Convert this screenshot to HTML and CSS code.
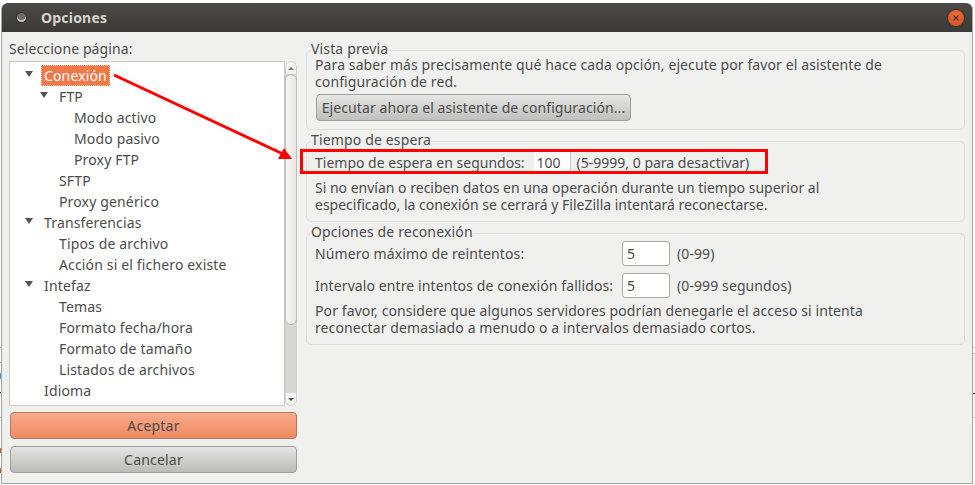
FILE: index.html
```html
<!DOCTYPE html>
<html lang="es">
  <head>
    <meta charset="utf-8" />
    <meta name="viewport" content="width=device-width" />
    <title>Opciones</title>
    <link rel="stylesheet" href="styles.css">
  </head>
  <body>
    <div class="window">
      <header class="titlebar">
        <span class="title-icon"></span>
        <span class="title">Opciones</span>
        <span class="close">
          <svg width="8" height="8" viewBox="0 0 8 8"><path d="M1.5 1.5l5 5M6.5 1.5l-5 5" stroke="#5b2410" stroke-width="1.3" /></svg>
        </span>
      </header>

      <div class="content">
        <div class="left">
          <div class="select-label">Seleccione página:</div>
          <div class="tree-wrap">
            <ul class="tree">
              <li class="row l0 open"><span class="selected">Conexión</span></li>
              <li class="row l1 open">FTP</li>
              <li class="row l2">Modo activo</li>
              <li class="row l2">Modo pasivo</li>
              <li class="row l2">Proxy FTP</li>
              <li class="row l1">SFTP</li>
              <li class="row l1">Proxy genérico</li>
              <li class="row l0 open">Transferencias</li>
              <li class="row l1">Tipos de archivo</li>
              <li class="row l1">Acción si el fichero existe</li>
              <li class="row l0 open">Intefaz</li>
              <li class="row l1">Temas</li>
              <li class="row l1">Formato fecha/hora</li>
              <li class="row l1">Formato de tamaño</li>
              <li class="row l1">Listados de archivos</li>
              <li class="row l0">Idioma</li>
            </ul>
            <div class="scrollbar">
              <div class="sb-btn up"></div>
              <div class="sb-track"><div class="sb-thumb"></div></div>
              <div class="sb-btn down"></div>
            </div>
          </div>
          <button class="btn btn-ok">Aceptar</button>
          <button class="btn btn-cancel">Cancelar</button>
        </div>

        <div class="right">
          <fieldset class="group group-preview">
            <legend>Vista previa</legend>
            <p>Para saber más precisamente qué hace cada opción, ejecute por favor el asistente de<br>configuración de red.</p>
            <button class="btn btn-wizard">Ejecutar ahora el asistente de configuración...</button>
          </fieldset>

          <fieldset class="group group-timeout">
            <legend>Tiempo de espera</legend>
            <div class="timeout-row">
              <span>Tiempo de espera en segundos:</span>
              <span class="timeout-value">100</span>
              <span>(5-9999, 0 para desactivar)</span>
            </div>
            <p>Si no envían o reciben datos en una operación durante un tiempo superior al<br>especificado, la conexión se cerrará y FileZilla intentará reconectarse.</p>
          </fieldset>

          <fieldset class="group group-retry">
            <legend>Opciones de reconexión</legend>
            <div class="retry-grid">
              <span>Número máximo de reintentos:</span>
              <span class="num-input">5</span>
              <span>(0-99)</span>
              <span>Intervalo entre intentos de conexión fallidos:</span>
              <span class="num-input">5</span>
              <span>(0-999 segundos)</span>
            </div>
            <p>Por favor, considere que algunos servidores podrían denegarle el acceso si intenta<br>reconectar demasiado a menudo o a intervalos demasiado cortos.</p>
          </fieldset>
        </div>
      </div>
    </div>

    <!-- annotations drawn on top of the screenshot, plus slivers of the window behind -->
    <svg class="notes" width="975" height="485" viewBox="0 0 975 485">
      <rect x="973" y="353" width="2" height="64" fill="#f2f2f2" />
      <rect x="973" y="347" width="2" height="1" fill="#c4c4c4" />
      <rect x="973" y="353" width="2" height="1" fill="#c4c4c4" />
      <rect x="973" y="393" width="2" height="1" fill="#4a1a1a" />
      <rect x="973" y="417" width="2" height="1" fill="#c4c4c4" />
      <rect x="0" y="347" width="1" height="1" fill="#b8b8b8" />
      <rect x="0" y="362" width="1" height="1" fill="#b8b8b8" />
      <rect x="0" y="373" width="1" height="6" fill="#4a9be0" />
      <rect x="0" y="392" width="1" height="1" fill="#4a1a1a" />
      <rect x="0" y="417" width="1" height="1" fill="#b8b8b8" />
      <rect x="0" y="448" width="1" height="5" fill="#c0632a" />
      <rect x="0" y="468" width="1" height="5" fill="#c0632a" />
      <rect x="301.5" y="150.5" width="465" height="22" fill="none" stroke="#f00" stroke-width="3" />
      <path d="M114 75L283 154" stroke="#f00" stroke-width="3" fill="none" />
      <path d="M292 159L278 159L284 148Z" fill="#f00" />
    </svg>
  </body>
</html>
```

FILE: styles.css
```css
html {
  font-family: "Noto Sans", sans-serif;
}

body {
  margin: 0;
  width: 975px;
  height: 485px;
  overflow: hidden;
  background: #fff;
  color: #4c4c4c;
  font-size: 14px;
  line-height: 21px;
  letter-spacing: 0.1px;
}

.window {
  margin: 3px 0 0 1px;
  width: 972px;
  height: 481px;
  display: flex;
  flex-direction: column;
  background: #f0f0ee;
  border: 1px solid #a5a5a2;
  border-top: none;
  border-radius: 6px 6px 0 0;
  box-sizing: border-box;
}

.titlebar {
  height: 29px;
  flex: none;
  display: flex;
  align-items: center;
  padding: 0 8px 0 15px;
  background: linear-gradient(#4b4a46, #3b3a36);
  border-radius: 6px 6px 0 0;
}

.title-icon {
  width: 9px;
  height: 9px;
  border-radius: 50%;
  background: #6f6e6a;
  box-shadow: inset 0 -2px 0 #c8c7c3, 0 0 0 1px #33322e;
}

.title {
  margin-left: 15px;
  font-weight: bold;
  font-size: 14px;
  letter-spacing: 0.2px;
  color: #d6d4cd;
}

.close {
  margin-left: auto;
  width: 16px;
  height: 16px;
  border-radius: 50%;
  display: flex;
  align-items: center;
  justify-content: center;
  background: radial-gradient(circle at 50% 35%, #f0703c, #cf4a1a);
  box-shadow: 0 0 0 1px #33322e;
}

.content {
  flex: 1;
  display: flex;
  gap: 9px;
  padding: 6px 7px 0 7px;
}

.left {
  width: 288px;
  flex: none;
}

.select-label {
  height: 21px;
}

.tree-wrap {
  display: flex;
  height: 345px;
  margin-top: 2px;
}

.tree {
  flex: 1;
  margin: 0;
  padding: 3px 0 0;
  list-style: none;
  background: #fff;
  border: 1px solid #c9c9c6;
  letter-spacing: 0.15px;
  overflow: hidden;
}

.row {
  position: relative;
  height: 21px;
  white-space: nowrap;
}

.l0 {
  padding-left: 34px;
}

.l1 {
  padding-left: 49px;
}

.l2 {
  padding-left: 64px;
}

.open::before {
  content: "";
  position: absolute;
  top: 6px;
  border-left: 4px solid transparent;
  border-right: 4px solid transparent;
  border-top: 6px solid #55554f;
}

.l0.open::before {
  left: 15px;
}

.l1.open::before {
  left: 30px;
}

.selected {
  display: inline-block;
  vertical-align: top;
  margin-left: -3px;
  padding: 0 3px;
  height: 21px;
  background: #f0794a;
  outline: 1px dotted #f7c4ad;
  outline-offset: -1px;
  color: #fff;
}

.scrollbar {
  width: 12px;
  display: flex;
  flex-direction: column;
}

.sb-btn {
  height: 13px;
  flex: none;
  position: relative;
  background: #f4f4f2;
  border: 1px solid #d2d2cf;
  box-sizing: border-box;
}

.sb-btn.up {
  border-radius: 6px 6px 0 0;
  border-bottom: none;
}

.sb-btn.down {
  border-radius: 0 0 6px 6px;
  border-top: none;
}

.sb-btn::after {
  content: "";
  position: absolute;
  left: 2px;
  border-left: 3px solid transparent;
  border-right: 3px solid transparent;
}

.sb-btn.up::after {
  top: 5px;
  border-bottom: 3px solid #777;
}

.sb-btn.down::after {
  top: 5px;
  border-top: 3px solid #555;
}

.sb-track {
  flex: 1;
  background: #d8d7d4;
  border-left: 1px solid #cfcfcc;
  border-right: 1px solid #cfcfcc;
}

.sb-thumb {
  height: 251px;
  box-sizing: border-box;
  background: linear-gradient(90deg, #f6f6f4, #e6e6e3);
  border: 1px solid #bdbdba;
  border-radius: 6px;
  margin: 0 -1px;
}

.btn {
  display: block;
  font: inherit;
  letter-spacing: inherit;
  color: #4c4c4c;
  height: 27px;
  padding: 0;
  border: 1px solid #a09f9b;
  border-radius: 4px;
}

.btn-ok {
  width: 287px;
  margin: 6px 0 0 1px;
  background: linear-gradient(#f8aa8a, #ef8a62);
  border-color: #b07a62;
  letter-spacing: 0.2px;
}

.btn-cancel {
  width: 287px;
  margin: 7px 0 0 1px;
  background: linear-gradient(#e4e4e2, #bbbbb8);
  letter-spacing: 0.2px;
}

.btn-wizard {
  width: 315px;
  margin: 4px 0 0 1px;
  background: linear-gradient(#e6e6e4, #bfbfbc);
}

.right {
  flex: 1;
  display: flex;
  flex-direction: column;
}

.group {
  margin: 7px 0 0;
  padding: 0 8px;
  border: 1px solid #dededb;
  border-radius: 5px;
  box-sizing: border-box;
  min-width: 0;
}

/* text sits a little above the border line, not centred on it */
.group legend {
  padding: 0 0 3px;
  margin-left: -4px;
  line-height: 5px;
  letter-spacing: 0.15px;
  background: #f0f0ee;
}

.group p {
  margin: 0;
  line-height: 17px;
}

.group-preview {
  height: 84px;
  margin-top: 8px;
}

.group-preview p {
  margin-top: 2px;
}

.group-timeout {
  height: 85px;
  letter-spacing: 0;
}

.group-retry {
  height: 116px;
}

.timeout-row {
  display: flex;
  align-items: center;
  height: 20px;
  margin-top: 7px;
}

.timeout-value {
  width: 37px;
  height: 20px;
  margin: 0 6px 0 9px;
  padding-left: 3px;
  box-sizing: border-box;
  background: #fff;
  border-right: 1px solid #c9c9c6;
}

.group-timeout p {
  margin-top: 7px;
}

.retry-grid {
  display: grid;
  grid-template-columns: 307px 48px auto;
  row-gap: 7px;
  align-items: center;
  margin-top: 4px;
}

.retry-grid span:nth-child(3n) {
  margin-left: 7px;
}

.num-input {
  height: 25px;
  line-height: 23px;
  padding-left: 4px;
  box-sizing: border-box;
  background: #fff;
  border: 1px solid #a9a9a6;
  border-radius: 3px;
}

.group-retry p {
  margin-top: 4px;
}

.notes {
  position: absolute;
  left: 0;
  top: 0;
  pointer-events: none;
}
```
